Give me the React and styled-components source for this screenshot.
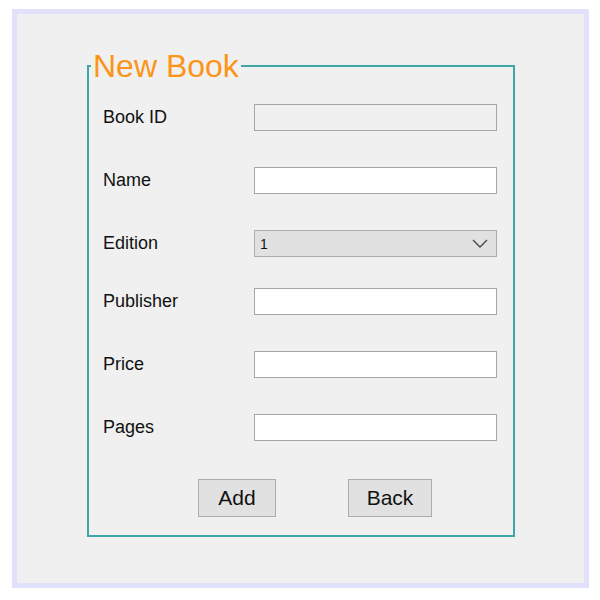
import React from "react";
import styled, { createGlobalStyle } from "styled-components";

const Global = createGlobalStyle`
  html, body { margin: 0; padding: 0; background: #ffffff; }
  body { font-family: "Liberation Sans", Arial, sans-serif; }
  * { box-sizing: border-box; }
`;

const Frame = styled.div`
  margin: 9px 0 0 12px;
  width: 577px;
  height: 579px;
  border: 5px solid #e1e1fb;
  background: #f0f0f0;
  display: flow-root;
`;

const Group = styled.fieldset`
  margin: 34px 0 0 70px;
  padding: 0;
  width: 428px;
  min-inline-size: 0;
  border: 2px solid #3fa6a6;
`;

const Legend = styled.legend`
  margin-left: 2px;
  padding: 0 2px;
  font-family: "Liberation Sans", Arial, sans-serif;
  font-size: 32px;
  line-height: 36px;
  color: #fb9518;
`;

const Body = styled.div`
  padding: 20px 14px 18px 14px;
  display: flex;
  flex-direction: column;
`;

const Row = styled.div`
  display: grid;
  grid-template-columns: 151px 243px;
  align-items: center;
  margin-bottom: ${(p) => p.$gap}px;
`;

const Label = styled.span`
  font-size: 18px;
  color: #111;
  line-height: 21px;
`;

const TextBox = styled.div`
  height: 27px;
  border: 1px solid #a6a6a6;
  background: ${(p) => (p.$disabled ? "#f0f0f0" : "#ffffff")};
`;

const Select = styled.div`
  height: 27px;
  border: 1px solid #adadad;
  background: #e1e1e1;
  display: flex;
  align-items: center;
  justify-content: space-between;
  padding: 0 5px 0 5px;
  font-size: 14px;
  color: #111;
`;

const Buttons = styled.div`
  display: flex;
  gap: 72px;
  margin-left: 95px;
`;

const Button = styled.div`
  width: ${(p) => p.$w}px;
  height: 38px;
  border: 1px solid #adadad;
  background: #e1e1e1;
  display: flex;
  align-items: center;
  justify-content: center;
  font-size: 21px;
  color: #111;
`;

const Chevron = () => (
  <svg width="16" height="9" viewBox="0 0 16 9" style={{ marginRight: 3 }}>
    <path d="M1 1 L8 8 L15 1" fill="none" stroke="#444" strokeWidth="1.3" />
  </svg>
);

export default function App() {
  return (
    <>
      <Global />
      <Frame>
        <Group>
          <Legend>New Book</Legend>
          <Body>
            <Row $gap={36}>
              <Label>Book ID</Label>
              <TextBox $disabled />
            </Row>
            <Row $gap={36}>
              <Label>Name</Label>
              <TextBox />
            </Row>
            <Row $gap={31}>
              <Label>Edition</Label>
              <Select>
                <span>1</span>
                <Chevron />
              </Select>
            </Row>
            <Row $gap={36}>
              <Label>Publisher</Label>
              <TextBox />
            </Row>
            <Row $gap={36}>
              <Label>Price</Label>
              <TextBox />
            </Row>
            <Row $gap={38}>
              <Label>Pages</Label>
              <TextBox />
            </Row>
            <Buttons>
              <Button $w={78}>Add</Button>
              <Button $w={84}>Back</Button>
            </Buttons>
          </Body>
        </Group>
      </Frame>
    </>
  );
}
